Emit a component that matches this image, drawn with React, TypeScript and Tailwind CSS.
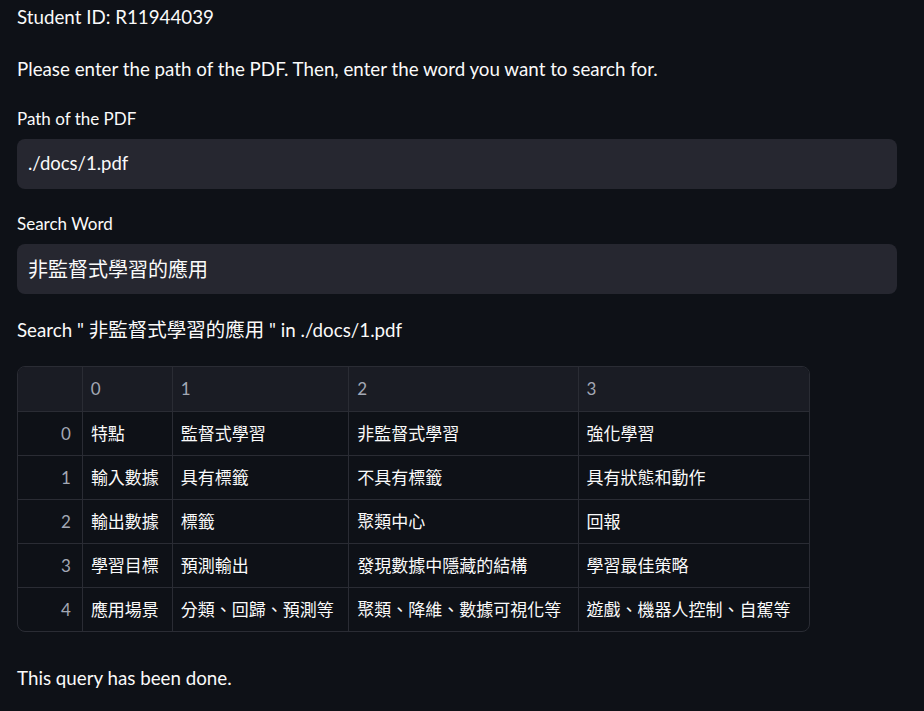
const FONT = "font-['Lato','Noto_Sans_CJK_TC',sans-serif]"

const ROWS = [
  ['特點', '監督式學習', '非監督式學習', '強化學習'],
  ['輸入數據', '具有標籤', '不具有標籤', '具有狀態和動作'],
  ['輸出數據', '標籤', '聚類中心', '回報'],
  ['學習目標', '預測輸出', '發現數據中隱藏的結構', '學習最佳策略'],
  ['應用場景', '分類、回歸、預測等', '聚類、降維、數據可視化等', '遊戲、機器人控制、自駕等'],
]

const COLS = ['w-[64px]', 'w-[90px]', 'w-[177px]', 'w-[230px]', 'w-[232px]']

function Field({ label, value, cjk }: { label: string; value: string; cjk?: boolean }) {
  return (
    <div>
      <div className="h-5 text-[17px] leading-5 text-[#fafafa]">{label}</div>
      <div
        className={`mt-[10px] flex h-[50px] items-center rounded-lg bg-[#262730] px-[11px] text-[#fafafa] ${
          cjk ? 'text-[20px]' : 'text-[18.5px]'
        }`}
      >
        {value}
      </div>
    </div>
  )
}

export default function App() {
  return (
    <div className={`min-h-[711px] w-[924px] bg-[#0e1117] pl-[17px] pr-[27px] ${FONT} text-[#fafafa]`}>
      <p className="pt-[5px] text-[18.75px] leading-6">Student ID: R11944039</p>
      <p className="mt-[28px] text-[18.75px] leading-6">
        Please enter the path of the PDF. Then, enter the word you want to search for.
      </p>
      <div className="mt-[28px]">
        <Field label="Path of the PDF" value="./docs/1.pdf" />
      </div>
      <div className="mt-[25px]">
        <Field label="Search Word" value="非監督式學習的應用" cjk />
      </div>
      <p className="mt-[24px] text-[18.75px] leading-6">
        Search " <span className="text-[19.5px]">非監督式學習的應用</span> " in ./docs/1.pdf
      </p>

      <div className="mt-[24px] w-[793px] overflow-hidden rounded-lg border border-[#2a2c34] text-[17px]">
        <div className="flex h-[44px] bg-[#1a1c24] text-[#a3a8b4]">
          {['', '0', '1', '2', '3'].map((h, i) => (
            <div
              key={i}
              className={`${COLS[i]} flex items-center px-[8px] ${i > 0 ? 'border-l border-[#2a2c34]' : ''}`}
            >
              {h}
            </div>
          ))}
        </div>
        {ROWS.map((row, r) => (
          <div key={r} className="flex h-[44px] border-t border-[#2a2c34]">
            <div className={`${COLS[0]} flex items-center justify-end px-[11px] text-[#a3a8b4]`}>{r}</div>
            {row.map((cell, c) => (
              <div
                key={c}
                className={`${COLS[c + 1]} flex items-center border-l border-[#2a2c34] px-[8px] text-[#fafafa]`}
              >
                {cell}
              </div>
            ))}
          </div>
        ))}
      </div>

      <p className="mt-[34px] text-[18.75px] leading-6">This query has been done.</p>
    </div>
  )
}
